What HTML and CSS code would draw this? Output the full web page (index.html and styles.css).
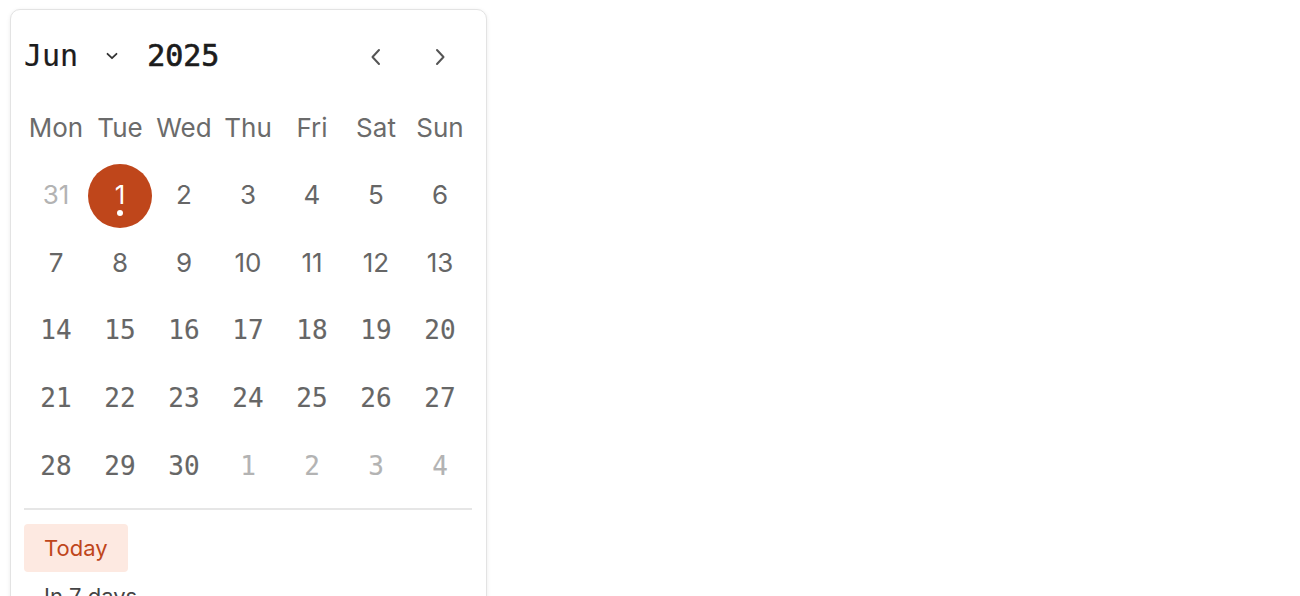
FILE: index.html
```html
<!DOCTYPE html>
<html>
<head>
<meta charset="utf-8">
<link rel="stylesheet" href="styles.css">
</head>
<body>
<div class="card">
  <div class="header">
    <div class="month">
      <span class="month-label">Jun</span>
      <svg class="caret" width="12" height="8" viewBox="0 0 12 8"><path d="M1.5 1.8 L6 6.2 L10.5 1.8" fill="none" stroke="#333" stroke-width="1.8" stroke-linecap="round" stroke-linejoin="round"/></svg>
    </div>
    <span class="year">2025</span>
    <div class="nav">
      <button class="nav-btn" aria-label="Previous month"><svg width="14" height="18" viewBox="0 0 14 18"><path d="M10 2 L3.5 9 L10 16" fill="none" stroke="#555" stroke-width="2" stroke-linecap="round" stroke-linejoin="round"/></svg></button>
      <button class="nav-btn" aria-label="Next month"><svg width="14" height="18" viewBox="0 0 14 18"><path d="M4 2 L10.5 9 L4 16" fill="none" stroke="#555" stroke-width="2" stroke-linecap="round" stroke-linejoin="round"/></svg></button>
    </div>
  </div>
  <div class="grid">
    <div class="wd">Mon</div><div class="wd">Tue</div><div class="wd">Wed</div><div class="wd">Thu</div><div class="wd">Fri</div><div class="wd">Sat</div><div class="wd">Sun</div>

    <div class="day sans out">31</div><div class="day sans selected">1<span class="dot"></span></div><div class="day sans">2</div><div class="day sans">3</div><div class="day sans">4</div><div class="day sans">5</div><div class="day sans">6</div>
    <div class="day sans">7</div><div class="day sans">8</div><div class="day sans">9</div><div class="day sans">10</div><div class="day sans">11</div><div class="day sans">12</div><div class="day sans">13</div>
    <div class="day mono">14</div><div class="day mono">15</div><div class="day mono">16</div><div class="day mono">17</div><div class="day mono">18</div><div class="day mono">19</div><div class="day mono">20</div>
    <div class="day mono">21</div><div class="day mono">22</div><div class="day mono">23</div><div class="day mono">24</div><div class="day mono">25</div><div class="day mono">26</div><div class="day mono">27</div>
    <div class="day mono">28</div><div class="day mono">29</div><div class="day mono">30</div><div class="day mono out">1</div><div class="day mono out">2</div><div class="day mono out">3</div><div class="day mono out">4</div>
  </div>
  <div class="divider"></div>
  <div class="presets">
    <button class="preset active">Today</button>
    <button class="preset">In 7 days</button>
  </div>
</div>
</body>
</html>
```

FILE: styles.css
```css
html, body {
  margin: 0;
  padding: 0;
  background: #fff;
}
body {
  font-family: Inter, "Noto Sans", sans-serif;
}
.card {
  margin: 9px 0 0 10px;
  width: 448px;
  padding: 13px 14px 20px 13px;
  border: 1px solid #e3e3e3;
  border-radius: 10px;
  box-shadow: 0 1px 4px rgba(0, 0, 0, 0.08);
  background: #fff;
}
.header {
  display: flex;
  align-items: center;
  height: 64px;
  margin-bottom: 9px;
}
.month {
  display: flex;
  align-items: center;
}
.month-label {
  font-family: "DejaVu Sans Mono", monospace;
  font-size: 30px;
  color: #1c1c1c;
  -webkit-text-stroke: 0.2px #1c1c1c;
}
.caret {
  margin-left: 28px;
  margin-right: 29px;
  margin-top: 1px;
}
.year {
  font-family: "DejaVu Sans Mono", monospace;
  font-size: 30px;
  color: #1c1c1c;
  -webkit-text-stroke: 0.7px #1c1c1c;
}
.nav {
  margin-left: auto;
  display: flex;
}
.nav-btn {
  width: 64px;
  height: 64px;
  border: 0;
  padding: 0;
  background: transparent;
  display: flex;
  align-items: center;
  justify-content: center;
  padding-top: 4px;
}
.grid {
  display: grid;
  grid-template-columns: repeat(7, 64px);
  grid-auto-rows: 64px;
  row-gap: 4px;
}
.wd {
  display: flex;
  align-items: center;
  justify-content: center;
  font-size: 26px;
  color: #6b6b6b;
  padding-bottom: 2px;
}
.day {
  position: relative;
  display: flex;
  align-items: center;
  justify-content: center;
  color: #666;
  padding-bottom: 4px;
  box-sizing: border-box;
}
.sans {
  font-family: Inter, "Noto Sans", sans-serif;
  font-size: 26px;
}
.mono {
  font-family: "DejaVu Sans Mono", monospace;
  font-size: 26px;
  -webkit-text-stroke: 0.15px currentColor;
}
.out {
  color: #b3b3b3;
}
.selected {
  background: #bf461b;
  color: #fff;
  border-radius: 50%;
}
.dot {
  position: absolute;
  left: 29px;
  bottom: 12px;
  width: 6px;
  height: 6px;
  border-radius: 50%;
  background: #fff;
}
.divider {
  height: 2px;
  background: #e6e6e6;
  margin: 8px 0 14px;
}
.presets {
  display: flex;
  flex-direction: column;
  align-items: flex-start;
}
.preset {
  height: 48px;
  padding: 0 20px;
  border: 0;
  border-radius: 4px;
  background: transparent;
  font-family: Inter, "Noto Sans", sans-serif;
  font-size: 22px;
  color: #444;
}
.preset.active {
  background: #fde9e1;
  color: #bf461b;
}
```
